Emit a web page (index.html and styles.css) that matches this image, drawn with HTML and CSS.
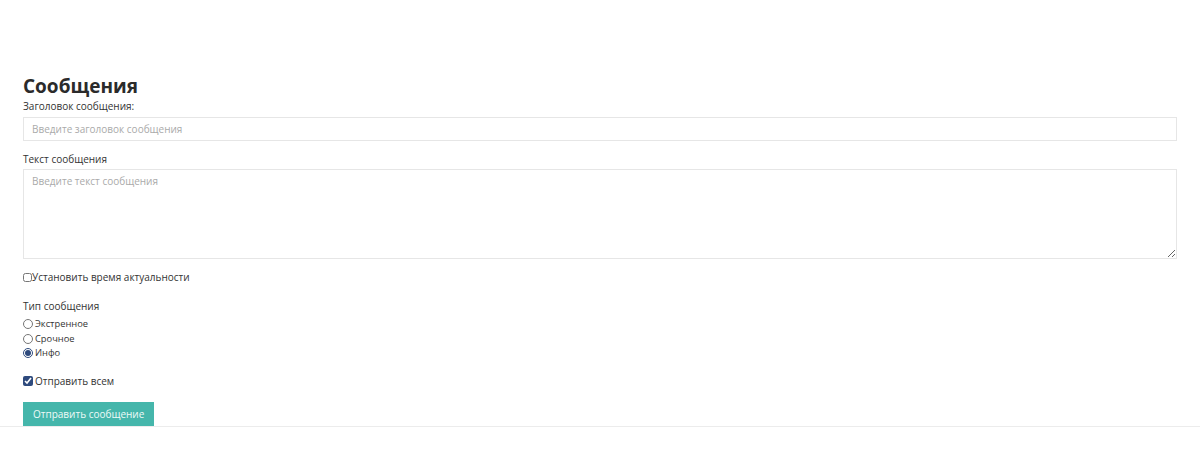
FILE: index.html
```html
<!DOCTYPE html>
<html lang="ru">
<head>
    <meta charset="UTF-8">
    <meta name="viewport" content="width=device-width, initial-scale=1.0">
    <title>Сообщения</title>
    <link rel="stylesheet" href="styles.css">
</head>
<body>
    <div class="page">
        <h1 class="title">Сообщения</h1>

        <!-- Message form -->
        <form class="message-form">
            <label class="field-label" for="msg-title">Заголовок сообщения:</label>
            <input type="text" id="msg-title" class="field-input" placeholder="Введите заголовок сообщения">

            <label class="field-label label-gap" for="msg-text">Текст сообщения</label>
            <textarea id="msg-text" class="field-text" placeholder="Введите текст сообщения"></textarea>

            <label class="check-row check-tight">
                <input type="checkbox" class="check">Установить время актуальности
            </label>

            <div class="field-label type-label">Тип сообщения</div>
            <div class="radio-list">
                <label class="radio-row"><input type="radio" name="type" class="radio">Экстренное</label>
                <label class="radio-row"><input type="radio" name="type" class="radio">Срочное</label>
                <label class="radio-row"><input type="radio" name="type" class="radio" checked>Инфо</label>
            </div>

            <label class="check-row send-all">
                <input type="checkbox" class="check" checked>Отправить всем
            </label>

            <div>
                <button type="button" class="send-button">Отправить сообщение</button>
            </div>
        </form>
    </div>
</body>
</html>
```

FILE: styles.css
```css
body {
    margin: 0;
    padding: 0;
    background-color: #fff;
    font-family: "Open Sans", "Noto Sans", sans-serif;
    color: #333;
}
.page {
    padding: 76px 23px 0 23px;
    border-bottom: 1px solid #ececec;
    box-shadow: 0 1px 2px rgba(0, 0, 0, 0.04);
}
.title {
    margin: 0 0 3px 0;
    font-size: 19px;
    font-weight: 700;
    line-height: 20px;
    color: #2b2b2b;
}
.message-form {
    display: flex;
    flex-direction: column;
}
.field-label {
    font-size: 10px;
    line-height: 14px;
    color: #333;
}
.label-gap {
    margin-top: 11px;
}
.field-input {
    margin-top: 4px;
    height: 24px;
    box-sizing: border-box;
    border: 1px solid #e6e6e6;
    padding: 0 8px;
    font-family: inherit;
    font-size: 10px;
    color: #333;
    outline: none;
}
.field-text {
    margin-top: 3px;
    height: 90px;
    box-sizing: border-box;
    border: 1px solid #e6e6e6;
    padding: 4px 8px;
    font-family: inherit;
    font-size: 10px;
    color: #333;
    outline: none;
}
.field-input::placeholder,
.field-text::placeholder {
    color: #aaa;
}
.check-row {
    display: flex;
    align-items: center;
    font-size: 10px;
    line-height: 14px;
    color: #333;
}
.check-tight {
    margin-top: 11px;
}
.check {
    width: 9px;
    height: 9px;
    margin: 0;
    accent-color: #2e4a7d;
}
.send-all .check {
    width: 10px;
    height: 10px;
    margin-right: 2px;
}
.type-label {
    margin-top: 15px;
}
.radio-list {
    display: flex;
    flex-direction: column;
    margin-top: 4px;
}
.radio-row {
    display: flex;
    align-items: center;
    font-size: 9.3px;
    line-height: 14.5px;
    color: #333;
}
.radio {
    width: 10px;
    height: 10px;
    margin: 0 2px 0 0;
    accent-color: #2e4a7d;
}
.send-all {
    margin-top: 13px;
}
.send-button {
    margin-top: 14px;
    height: 24px;
    padding: 0 10px;
    border: none;
    background-color: #45b6ab;
    color: #eefaf8;
    font-family: inherit;
    font-size: 10px;
    cursor: pointer;
}
```
